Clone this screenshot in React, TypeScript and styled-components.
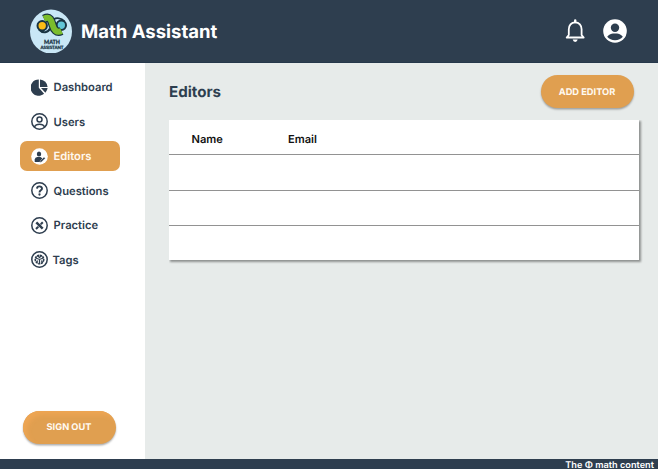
import React from "react";
import styled, { createGlobalStyle, css } from "styled-components";

const navy = "#2e3e4f";
const orange = "#e09f50";

const GlobalStyle = createGlobalStyle`
  *, *::before, *::after { box-sizing: border-box; }
  body {
    margin: 0;
    font-family: Inter, "Liberation Sans", sans-serif;
    text-rendering: geometricPrecision;
    overflow: hidden;
  }
  svg { display: block; flex: none; }
`;

const Page = styled.div`
  display: flex;
  flex-direction: column;
  width: 658px;
  height: 469px;
  background: #e7ebea;
`;

const Header = styled.header`
  display: flex;
  align-items: center;
  height: 63px;
  padding: 0 31px 0 30px;
  background: ${navy};
  color: #fff;
  border-bottom: 1px solid #26384b;
`;

const Brand = styled.h1`
  margin: 2px auto 0 9px;
  font-size: 18.5px;
  font-weight: 700;
  line-height: 24px;
  white-space: nowrap;
`;

const HeaderActions = styled.div`
  display: flex;
  align-items: center;
  gap: 18px;
`;

const Body = styled.div`
  display: flex;
  height: 396px;
`;

const Sidebar = styled.aside`
  display: flex;
  flex-direction: column;
  justify-content: space-between;
  width: 145px;
  padding: 9px 0 15px 20px;
  background: #fff;
`;

const Nav = styled.nav`
  display: flex;
  flex-direction: column;
  gap: 4.6px;
`;

const NavItem = styled.a<{ $active?: boolean; $gap?: number }>`
  display: flex;
  align-items: center;
  gap: ${(p) => p.$gap ?? 5.6}px;
  width: 100px;
  height: 30px;
  padding-left: 11px;
  border-radius: 7px;
  color: ${navy};
  font-size: 11.2px;
  font-weight: 600;
  white-space: nowrap;
  ${(p) =>
    p.$active &&
    css`
      background: ${orange};
      color: #fff8ee;
    `}
`;

const PillButton = styled.button<{ $raised?: boolean }>`
  width: 93px;
  height: 33px;
  padding: 1px 1px 0 0;
  border: 0;
  border-radius: 17px;
  background: ${orange};
  color: #fffaf2;
  font: 700 9.25px Inter, "Liberation Sans", sans-serif;
  text-rendering: geometricPrecision;
  box-shadow: 0 1.5px 2px rgba(0, 0, 0, 0.32)
    ${(p) => p.$raised && css`, inset 4px 4px 4px #eda553`};
`;

const SignOut = styled(PillButton)`
  margin-left: 3px;
  padding: 0 1px 1px 0;
`;

const Main = styled.main`
  flex: 1;
  padding: 12px 19px 0 24px;
`;

const TitleRow = styled.div`
  display: flex;
  align-items: center;
  justify-content: space-between;
  height: 33px;
  padding-right: 5px;
  margin-bottom: 12px;
`;

const Title = styled.h2`
  margin: 0;
  color: ${navy};
  font-size: 15.1px;
  font-weight: 700;
`;

const Table = styled.div`
  display: grid;
  grid-template-rows: 35px 36px 35px 34px;
  width: 470px;
  background: #fff;
  box-shadow: 1px 1px 2px 0.5px rgba(0, 0, 0, 0.38);
  clip-path: inset(0 -5px -5px 0);
`;

const Row = styled.div`
  display: grid;
  grid-template-columns: 96.5px 1fr;
  align-items: center;
  padding: 4px 0 0 22.5px;
  color: #111;
  font-size: 11.1px;
  font-weight: 600;
  &:not(:last-child) { border-bottom: 1px solid #929292; }
`;

const Footer = styled.footer`
  height: 10px;
  padding-right: 4px;
  background: ${navy};
  color: #fff;
  font-size: 9.2px;
  font-weight: 600;
  line-height: 13px;
  text-align: right;
  white-space: nowrap;
`;

const Logo = () => (
  <svg width="42" height="44" viewBox="0 0 42 44">
    <ellipse cx="21" cy="22.5" rx="21" ry="22" fill="#c9e7f6" />
    <path d="M23.5 10.5C26.5 8.5 31 9 34.5 12.5M9 20.5C13 25 18 23.5 20 19.5" fill="none" stroke="#193442" strokeWidth="2" />
    <circle cx="12.2" cy="16.7" r="4.7" fill="#fcbd16" stroke="#193442" strokeWidth="2" />
    <circle cx="31.3" cy="16.3" r="4.7" fill="#62c6d8" stroke="#193442" strokeWidth="2" />
    <path d="M14 9.8C20 6.8 21.3 11.5 22.6 16C23.8 20.5 26.5 24.5 31.5 22" fill="none" stroke="#193442" strokeWidth="8.4" />
    <path d="M14 9.8C20 6.8 21.3 11.5 22.6 16C23.8 20.5 26.5 24.5 31.5 22" fill="none" stroke="#7bbd2c" strokeWidth="6" />
    <g fill="#173344" stroke="#173344" strokeWidth=".25" fontFamily="Lato, sans-serif" fontWeight="900" textAnchor="middle">
      <text x="22" y="34.8" fontSize="5.8" textLength="16" lengthAdjust="spacingAndGlyphs">MATH</text>
      <text x="22" y="39.8" fontSize="4.4" textLength="23" lengthAdjust="spacingAndGlyphs">ASSISTANT</text>
    </g>
  </svg>
);

const Bell = () => (
  <svg width="20" height="24" viewBox="0 0 20 24" fill="none" stroke="#fff" strokeWidth="1.8" strokeLinejoin="round" strokeLinecap="round">
    <path d="M1.7 18.5H18.7L16.6 16V10.2C16.6 6.3 14.2 3.3 10.2 3.3S3.8 6.3 3.8 10.2V16Z" />
    <path d="M10.2 1.5V3" strokeWidth="2.4" />
    <path d="M7.7 20.6H12.7Q12.2 23 10.2 23T7.7 20.6Z" fill="#fff" stroke="none" />
  </svg>
);

const Account = () => (
  <svg width="24" height="24" viewBox="0 0 24 24">
    <circle cx="12" cy="12" r="11.8" fill="#fff" />
    <circle cx="12" cy="8.7" r="4.2" fill={navy} />
    <path d="M4.2 17.8C6.5 14.8 9 14.4 12 14.4S17.5 14.8 19.8 17.8Q17 21.2 12 21.2T4.2 17.8Z" fill={navy} />
  </svg>
);

const iconProps = { width: 17, height: 17, viewBox: "0 0 17 17", fill: "none", stroke: navy, strokeWidth: 1.5 };
const Ring = () => <circle cx="8.5" cy="8.5" r="7.7" />;

const PieIcon = () => (
  <svg {...iconProps} fill={navy} stroke="none">
    <path d="M7.8.4V8.8L13.1 14.8A8.2 8.2 0 1 1 7.8.4Z" />
    <path d="M9 .4A8 8 0 0 1 16.6 8H9Z" />
    <path d="M10 9.1H16.6A8 8 0 0 1 14.4 13.7Z" />
  </svg>
);

const UserIcon = () => (
  <svg {...iconProps}>
    <Ring />
    <circle cx="8.5" cy="6.6" r="2.5" />
    <path d="M3.3 14C4.5 11.8 6 11.2 8.5 11.2S12.5 11.8 13.7 14" />
  </svg>
);

const EditorIcon = () => (
  <svg {...iconProps} stroke="none">
    <circle cx="8.5" cy="8.5" r="8.3" fill="#fff" />
    <ellipse cx="8" cy="6" rx="2.2" ry="2.6" fill={navy} />
    <path d="M3.7 13.8V11.5Q4 9.3 6.3 9.1H9.5L11.2 10.3L10 14H4Z" fill={navy} />
    <path d="M8.8 14.5L9.3 12.8L13 9L14.3 10.3L10.5 14.1Z" fill={navy} stroke="#fff" strokeWidth=".4" />
  </svg>
);

const QuestionIcon = () => (
  <svg {...iconProps}>
    <Ring />
    <path d="M6 6.6C6.1 3.5 11.1 3.7 11 6.6C10.9 8.4 8.5 8.2 8.5 10.4" strokeWidth="1.9" />
    <circle cx="8.5" cy="12.5" r="1.15" fill={navy} stroke="none" />
  </svg>
);

const PracticeIcon = () => (
  <svg {...iconProps}>
    <Ring />
    <path d="M5.3 5.3L11.7 11.7" strokeWidth="2.4" />
    <path d="M11.8 5.2L6 11L5 12" strokeWidth="2" />
    <path d="M6.5 8.8L8.3 10.6M8.8 6.4L10.7 8.3" stroke="#fff" strokeWidth=".6" />
  </svg>
);

const TagsIcon = () => (
  <svg {...iconProps}>
    <Ring />
    <circle cx="8.5" cy="8.5" r="4.2" strokeWidth="1.7" strokeDasharray="2.2 .6" />
    <path d="M4.8 7L8.5 8.5L12.2 7M8.5 8.5V12.5M6.4 4.8L8.5 6.5L10.6 4.8M5.5 11L7 9.6M11.5 11L10 9.6" strokeWidth="1.1" />
  </svg>
);

const navItems = [
  { label: "Dashboard", Icon: PieIcon },
  { label: "Users", Icon: UserIcon },
  { label: "Editors", Icon: EditorIcon, active: true },
  { label: "Questions", Icon: QuestionIcon },
  { label: "Practice", Icon: PracticeIcon },
  { label: "Tags", Icon: TagsIcon, gap: 4.4 },
];

export default function App() {
  return (
    <Page>
      <GlobalStyle />
      <Header>
        <Logo />
        <Brand>Math Assistant</Brand>
        <HeaderActions>
          <Bell />
          <Account />
        </HeaderActions>
      </Header>
      <Body>
        <Sidebar>
          <Nav>
            {navItems.map(({ label, Icon, active, gap }) => (
              <NavItem key={label} $active={active} $gap={gap}>
                <Icon />
                {label}
              </NavItem>
            ))}
          </Nav>
          <SignOut $raised>SIGN OUT</SignOut>
        </Sidebar>
        <Main>
          <TitleRow>
            <Title>Editors</Title>
            <PillButton>ADD EDITOR</PillButton>
          </TitleRow>
          <Table>
            <Row>
              <span>Name</span>
              <span>Email</span>
            </Row>
            <Row />
            <Row />
            <Row />
          </Table>
        </Main>
      </Body>
      <Footer>The Φ math content</Footer>
    </Page>
  );
}
